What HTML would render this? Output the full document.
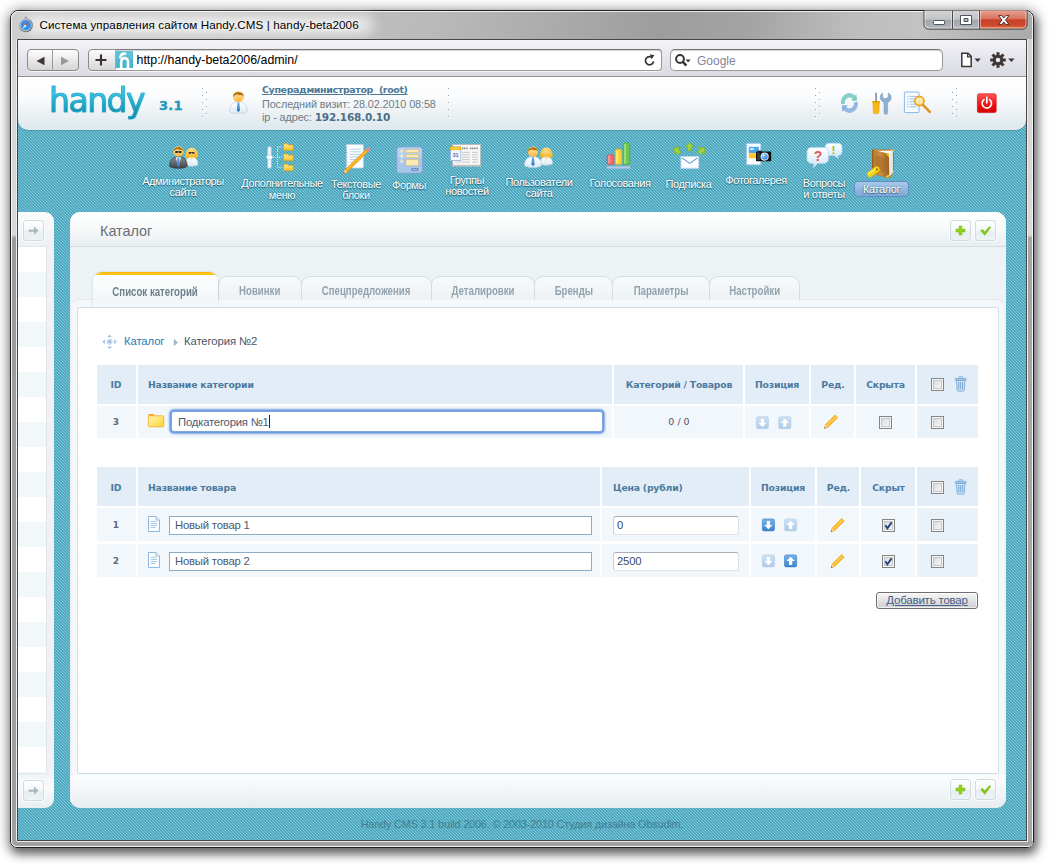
<!DOCTYPE html>
<html lang="ru">
<head>
<meta charset="utf-8">
<title>Система управления сайтом Handy.CMS | handy-beta2006</title>
<style>
*{box-sizing:border-box;margin:0;padding:0}
html,body{width:1052px;height:866px;overflow:hidden;background:#fff}
body{position:relative;font-family:"Liberation Sans",sans-serif;font-size:12px;color:#333}
.abs{position:absolute}
/* ---------- window frame ---------- */
#win{position:absolute;left:10px;top:10px;width:1024px;height:838px;border-radius:8px 8px 7px 7px;
 border:1px solid #1e1e1e;
 background:linear-gradient(97deg,#cfcfcf 0%,#c9c9c9 3%,#c2c2c2 25%,#b9b9b9 38%,#a9a9a9 50%,#9d9d9d 58%,#a4a4a4 66%,#bdbdbd 75%,#c2c2c2 81%,#adadad 89%,#a9a9a9 94%,#b9b9b9 100%);
 box-shadow:2px 5px 10px 1px rgba(0,0,0,.50), 0 1px 14px 2px rgba(0,0,0,.30);}
#win:before{content:"";position:absolute;left:0;top:0;right:0;bottom:0;border-radius:7px 7px 6px 6px;border:1px solid rgba(255,255,255,.8);}
#tglow{position:absolute;left:24px;top:15px;width:350px;height:20px;border-radius:10px;background:rgba(255,255,255,.62);filter:blur(6px)}
#frameL,#frameR,#frameB{position:absolute}
#frameL{left:12px;top:39px;width:5px;height:803px;background:linear-gradient(#d4d4d4 0,#d8d8d8 196px,#9c9c9c 199px,#a0a0a0 100%);border-right:1px solid #eee}
#frameR{left:1027px;top:39px;width:6px;height:803px;background:linear-gradient(#d4d4d4 0,#d8d8d8 196px,#a6a6a6 199px,#a8a8a8 100%);border-left:1px solid #eee;border-right:1px solid #f4f4f4}
#frameB{left:12px;top:841px;width:1021px;height:6px;border-radius:0 0 5px 5px;background:#a2a2a2;border-bottom:1px solid #f2f2f2}
#frameB:before{content:"";position:absolute;left:5px;top:0;width:1011px;height:1px;background:#ececec}
#title{position:absolute;left:39.5px;top:18px;font-size:11.65px;color:#000;white-space:nowrap;letter-spacing:.1px;
 text-shadow:0 0 5px #fff,0 0 8px #fff}
#client{position:absolute;left:17px;top:39px;width:1010px;height:802px;border:1px solid #4a4444;background:#5fb1c5;overflow:hidden}
/* ---------- browser toolbar ---------- */
#tb{position:absolute;left:0;top:0;width:1008px;height:37px;background:linear-gradient(#f3f3f8,#e4e4ec 55%,#dadae2);border-bottom:1px solid #8f8f96}
.btn{position:absolute;border:1px solid #8a8a8a;border-radius:4px;background:linear-gradient(#fefefe,#e9e9e9 50%,#d6d6d6);box-shadow:0 1px 0 rgba(255,255,255,.7)}
.field{position:absolute;background:#fff;border:1px solid #9a9a9a;border-top-color:#777;box-shadow:inset 0 1px 1px rgba(0,0,0,.18)}

/* ---------- page ---------- */
#page{position:absolute;left:0;top:37px;width:1008px;height:764px;
 background:repeating-linear-gradient(45deg,#4ba8bf 0,#4ba8bf 1.06px,#83c6d7 1.06px,#83c6d7 2.1213px)}
#hdr{position:absolute;left:0;top:0;width:1008px;height:53px;border-radius:0 0 10px 10px;
 background:linear-gradient(#ffffff 0,#fbfcfd 35%,#e9eff2 75%,#dde8ed 100%);box-shadow:0 1px 1px rgba(40,110,130,.35)}
#logo{position:absolute;left:31px;top:4px;font-family:"DejaVu Sans","Liberation Sans",sans-serif;font-size:33px;letter-spacing:-1.5px;color:#22a6c8;
 background:linear-gradient(#3cc4e0 30%,#168fb2 78%);-webkit-background-clip:text;background-clip:text;-webkit-text-fill-color:transparent;-webkit-text-stroke:.7px #25a8c9;line-height:40px}
#ver{position:absolute;left:141px;top:21px;font-family:"DejaVu Sans",sans-serif;font-weight:bold;font-size:13px;color:#2597ba;letter-spacing:.3px;-webkit-text-stroke:.4px #2597ba}
.vb{font-family:"DejaVu Sans",sans-serif;font-weight:bold}

.nl{position:absolute;width:120px;text-align:center;font-size:11px;line-height:11px;color:#fff;white-space:nowrap;letter-spacing:-.4px;text-shadow:0 1px 1px rgba(20,80,100,.75),0 0 2px rgba(30,90,110,.55)}
.ni{position:absolute}

#side{position:absolute;left:0;top:135px;width:36px;height:596px;border-radius:0 9px 9px 0;background:linear-gradient(#fafcfc 0,#eef2f4 30px,#eef2f4 560px,#f8fafb 575px,#e9eef0 100%)}
#side .list{position:absolute;left:0;top:34px;width:29px;height:528px;border:1px solid #dfe7eb;border-left:0;
 background:repeating-linear-gradient(#fff 0,#fff 25px,#f2f7fa 25px,#f2f7fa 50px)}
.sbtn{position:absolute;width:21px;height:21px;border:1px solid #cfdbe0;border-radius:3px;background:linear-gradient(#fdfefe,#f4f8f9 50%,#e7eef1 52%,#eef3f5);box-shadow:0 0 0 1px rgba(255,255,255,.6)}
#main{position:absolute;left:52px;top:135px;width:936px;height:596px;border-radius:10px;background:#edf2f5;overflow:hidden}
#mt{position:absolute;left:0;top:0;width:936px;height:35px;background:linear-gradient(#ffffff,#f6f8f9 50%,#e9eef1);border-bottom:1px solid #d3dde2}
#mtitle{position:absolute;left:30px;top:11px;font-size:14.4px;color:#686e74;letter-spacing:0}
#mb{position:absolute;left:0;top:563px;width:936px;height:33px;background:linear-gradient(#fbfcfd,#f1f5f7 55%,#e6ecef)}
#tframe{position:absolute;left:1px;top:87px;width:934px;height:480px;border-radius:9px;border:1px solid #dfe7eb;border-left-color:#eef2f5;border-right-color:#eef2f5;border-bottom-color:#eef2f5;background:#f5f8fa}
#inner{position:absolute;left:7px;top:95px;width:922px;height:467px;background:#fff;border:1px solid #d2dee4;border-radius:2px}

.tab{position:absolute;top:64px;height:24px;border:1px solid #d3dde3;border-bottom:0;border-radius:9px 9px 0 0;background:linear-gradient(#f7fafb,#edf2f5);text-align:center;font-weight:bold;font-size:12px;color:#93a3ae;line-height:29px;white-space:nowrap}
.tab span{display:inline-block;transform:scaleX(.805);transform-origin:50% 50%}
.tab.act{top:60px;height:35px;border:0;background:linear-gradient(#ffb800 0,#ffc928 3px,#fdfefe 3px,#f6f9fa 20px,#f2f6f8 28px,#f5f8fa 100%);color:#6e7f8c;line-height:40px;box-shadow:0 0 2px rgba(120,150,165,.45);clip-path:inset(-3px -3px 0 -3px)}

#inner .c{position:absolute;background:#f2f7fc}
#inner .c.l{background:#e9f1f9}
#inner .h{position:absolute;background:#e3edf7}
.th{position:absolute;font-family:"DejaVu Sans",sans-serif;font-weight:bold;font-size:9.3px;color:#4a7a9e;white-space:nowrap;letter-spacing:-.2px;line-height:12px;margin-top:1px}
.thc{text-align:center}
.td{position:absolute;font-family:"DejaVu Sans",sans-serif;font-size:9px;font-weight:bold;color:#5d6b78;white-space:nowrap;text-align:center;line-height:12px}
.inp{position:absolute;background:#fff;border:1px solid #8eabc4;font-size:11.3px;color:#4b5a6e;line-height:17px;padding-left:5px;white-space:nowrap;letter-spacing:-.2px}
.inp2{position:absolute;background:#fff;border:1px solid #dde1e8;border-top-color:#a9adb5;border-left-color:#c9cdd5;border-radius:3px;font-size:11.3px;color:#3c4c66;line-height:17px;padding-left:3px;letter-spacing:-.2px;white-space:nowrap}
.cb{position:absolute;width:13px;height:13px;border:1px solid #858585;background:linear-gradient(135deg,#cfd3d7,#ececec 55%,#f8f8f8);box-shadow:inset 0 0 0 1px #f6f6f6, inset 0 0 0 2px #c4c7ca}
</style>
</head>
<body>
<div id="win"></div><div id="tglow"></div>
<div id="frameL"></div><div id="frameR"></div><div id="frameB"></div>
<svg class="abs" style="left:10px;top:10px" width="1024" height="30" viewBox="10 10 1024 30">
<defs>
<linearGradient id="wG" x1="0" y1="0" x2="0" y2="1"><stop offset="0" stop-color="#d4d4d6"/><stop offset=".48" stop-color="#c2c3c6"/><stop offset=".5" stop-color="#a2a5aa"/><stop offset="1" stop-color="#b4b7bb"/></linearGradient>
<linearGradient id="wR" x1="0" y1="0" x2="0" y2="1"><stop offset="0" stop-color="#e9a393"/><stop offset=".45" stop-color="#d9705c"/><stop offset=".5" stop-color="#c8402a"/><stop offset=".8" stop-color="#cf4a2c"/><stop offset="1" stop-color="#e08058"/></linearGradient>
<radialGradient id="sfB" cx=".5" cy=".35" r=".75"><stop offset="0" stop-color="#4a90e6"/><stop offset=".6" stop-color="#2f8fe4"/><stop offset="1" stop-color="#62d0fa"/></radialGradient>
<linearGradient id="sfR" x1="0" y1="0" x2="1" y2="1"><stop offset="0" stop-color="#d8d8d8"/><stop offset=".5" stop-color="#8a8a8a"/><stop offset="1" stop-color="#5a5a5a"/></linearGradient>
</defs>
<path d="M924 10.500 H1027 V24.600 a4.500 4.500 0 0 1 -4.500 4.500 H928.500 a4.500 4.500 0 0 1 -4.500 -4.500Z" fill="url(#wG)"/>
<path d="M979.500 10.500 H1027 V24.600 a4.500 4.500 0 0 1 -4.500 4.500 H979.500Z" fill="url(#wR)"/>
<path d="M924 10.500 V24.600 a4.500 4.500 0 0 0 4.500 4.500 H1022.500 a4.500 4.500 0 0 0 4.500 -4.500 V10.500" fill="none" stroke="#3c3c3c" stroke-width="1"/>
<path d="M925 11.500 V24.400 a3.600 3.600 0 0 0 3.600 3.600 H1022.400 a3.600 3.600 0 0 0 3.600 -3.600 V11.500" fill="none" stroke="rgba(255,255,255,.55)" stroke-width="1"/>
<path d="M952.500 10.500V29M979.500 10.500V29" stroke="#4a4a4a" stroke-width="1"/><path d="M953.500 11V28M980.500 11V28M951.500 11V28M978.500 11V28" stroke="rgba(255,255,255,.45)" stroke-width="1"/>
<rect x="933.500" y="20.500" width="11" height="4" rx=".8" fill="#fff" stroke="#4d5360" stroke-width="1"/>
<path d="M960.500 15.500h11v9h-11z M964 18.500 v3 h4 v-3z" fill="#fff" fill-rule="evenodd" stroke="#4d5360" stroke-width="1" stroke-linejoin="round"/>
<path d="M998.600 15.600 h3.400 l1.800 2.500 1.800 -2.500 h3.400 l-3.400 4.400 3.400 4.400 h-3.400 l-1.800 -2.500 -1.800 2.500 h-3.400 l3.400 -4.400z" fill="#fff" stroke="#53332c" stroke-width="1" stroke-linejoin="round"/>
<circle cx="25.800" cy="25.200" r="7" fill="url(#sfR)"/><circle cx="25.800" cy="25.200" r="5.600" fill="url(#sfB)" stroke="#e8eef4" stroke-width=".5"/>
<rect x="24.600" y="16.800" width="2.400" height="1.800" rx=".6" fill="#9a9a9a"/>
<path d="M29.400 21.400 L26.600 26 L25 24.400Z" fill="#e04820"/><path d="M22.200 29 L25 24.400 L26.600 26Z" fill="#f4f4f4"/>
</svg>
<div id="title">Система управления сайтом Handy.CMS | handy-beta2006</div>
<div id="client">
  <div id="tb">
    <div class="btn" style="left:9px;top:9px;width:52px;height:22px"></div>
    <div class="abs" style="left:34px;top:10px;width:1px;height:20px;background:#9a9a9a"></div>
    <svg class="abs" style="left:9px;top:10px" width="52" height="22" viewBox="0 0 52 22"><path d="M9.5 11 L17.5 6.8 V15.2Z" fill="#3f3535"/><path d="M42 11 L34 6.8 V15.2Z" fill="#9c9797"/></svg>
    <div class="btn" style="left:70px;top:9px;width:574px;height:22px"></div>
    <div class="field" style="left:97px;top:9px;width:547px;height:22px;border-radius:0 4px 4px 0;border-left-color:#aaa"></div>
    <svg class="abs" style="left:76px;top:13px" width="14" height="14" viewBox="0 0 14 14"><path d="M7 1.5V12.5M1.5 7H12.5" stroke="#3a3030" stroke-width="2.1"/></svg>
    <svg class="abs" style="left:98px;top:11px" width="17" height="17" viewBox="0 0 17 17"><rect width="17" height="17" fill="#4cb6cf"/><rect x="0" y="0" width="17" height="8" fill="#6cc6dc" opacity=".6"/><path d="M5.2 17V10.5a3.4 3.4 0 0 1 6.8 0V17" fill="none" stroke="#fff" stroke-width="2.6"/><path d="M4.2 6.2C5 3.6 7 2.4 9.3 2.6" fill="none" stroke="#fff" stroke-width="2.4" stroke-linecap="round"/></svg>
    <div class="abs" id="url" style="left:118.5px;top:13px;font-size:12.4px;color:#000;white-space:nowrap">http://handy-beta2006/admin/</div>
    <svg class="abs" style="left:625px;top:14px" width="13" height="13" viewBox="0 0 13 13"><path d="M9.6 3.9A4.1 4.1 0 1 0 10.6 7.4" fill="none" stroke="#3a3434" stroke-width="1.7"/><path d="M7 .2 L11.4 1.2 L8.4 5Z" fill="#3a3434"/></svg>
    <div class="field" style="left:652px;top:9px;width:273px;height:22px;border-radius:5px"></div>
    <svg class="abs" style="left:656px;top:13px" width="20" height="16" viewBox="0 0 20 16"><circle cx="6" cy="6" r="3.9" fill="none" stroke="#3a3434" stroke-width="2"/><path d="M8.8 8.8L12.4 12.6" stroke="#3a3434" stroke-width="2.4"/><path d="M11.6 6.6h5l-2.5 3z" fill="#3a3434"/></svg>
    <div class="abs" style="left:679px;top:14px;font-size:12px;color:#83839a">Google</div>
    <svg class="abs" style="left:942px;top:12px" width="24" height="16" viewBox="0 0 24 16"><path d="M1.8 1.2h6.2l3.2 3.2v10.2H1.8z" fill="#fff" stroke="#3f3535" stroke-width="1.5"/><path d="M7.6 1.2v3.6h3.6" fill="none" stroke="#3f3535" stroke-width="1.3"/><path d="M14.5 6.4h6.4l-3.2 3.6z" fill="#3f3535"/></svg>
    <svg class="abs" style="left:971px;top:11px" width="28" height="18" viewBox="0 0 28 18"><g transform="translate(9,9)" fill="#3f3535"><circle r="5.2"/><g id="t"><rect x="-1.5" y="-7.8" width="3" height="15.6"/></g><rect x="-1.5" y="-7.8" width="3" height="15.6" transform="rotate(45)"/><rect x="-1.5" y="-7.8" width="3" height="15.6" transform="rotate(90)"/><rect x="-1.5" y="-7.8" width="3" height="15.6" transform="rotate(135)"/><circle r="2.3" fill="#e9e9f0"/></g><path d="M19.2 7.4h6.4l-3.2 3.6z" fill="#3f3535"/></svg>
  </div>
  <div id="page">
    <div id="hdr">
      <div id="logo">handy</div>
      <div id="ver">3.1</div>
      <div class="abs" style="left:184px;top:11px;width:1px;height:1px;background:#8ea6b4;box-shadow:0px 7px 0 #8ea6b4,0px 14px 0 #8ea6b4,0px 21px 0 #8ea6b4,0px 28px 0 #8ea6b4,4px 4px 0 #8ea6b4,4px 11px 0 #8ea6b4,4px 18px 0 #8ea6b4,4px 25px 0 #8ea6b4,1px 1px 0 #fff,1px 8px 0 #fff,1px 15px 0 #fff,1px 22px 0 #fff,1px 29px 0 #fff,5px 5px 0 #fff,5px 12px 0 #fff,5px 19px 0 #fff,5px 26px 0 #fff"></div><div class="abs" style="left:430px;top:11px;width:1px;height:1px;background:#8ea6b4;box-shadow:0px 7px 0 #8ea6b4,0px 14px 0 #8ea6b4,0px 21px 0 #8ea6b4,0px 28px 0 #8ea6b4,1px 1px 0 #fff,1px 8px 0 #fff,1px 15px 0 #fff,1px 22px 0 #fff,1px 29px 0 #fff"></div><div class="abs" style="left:797px;top:11px;width:1px;height:1px;background:#8ea6b4;box-shadow:0px 7px 0 #8ea6b4,0px 14px 0 #8ea6b4,0px 21px 0 #8ea6b4,0px 28px 0 #8ea6b4,4px 4px 0 #8ea6b4,4px 11px 0 #8ea6b4,4px 18px 0 #8ea6b4,4px 25px 0 #8ea6b4,1px 1px 0 #fff,1px 8px 0 #fff,1px 15px 0 #fff,1px 22px 0 #fff,1px 29px 0 #fff,5px 5px 0 #fff,5px 12px 0 #fff,5px 19px 0 #fff,5px 26px 0 #fff"></div><div class="abs" style="left:938px;top:11px;width:1px;height:1px;background:#8ea6b4;box-shadow:0px 7px 0 #8ea6b4,0px 14px 0 #8ea6b4,0px 21px 0 #8ea6b4,0px 28px 0 #8ea6b4,-4px 4px 0 #8ea6b4,-4px 11px 0 #8ea6b4,-4px 18px 0 #8ea6b4,-4px 25px 0 #8ea6b4,-1px 1px 0 #fff,-1px 8px 0 #fff,-1px 15px 0 #fff,-1px 22px 0 #fff,-1px 29px 0 #fff,-5px 5px 0 #fff,-5px 12px 0 #fff,-5px 19px 0 #fff,-5px 26px 0 #fff"></div>
      <!--USERICON-->
      <div class="abs vb" style="left:244px;top:7px;font-size:9.5px;color:#4d7896;text-decoration:underline;white-space:nowrap;letter-spacing:-.38px">Суперадминистратор&nbsp; (root)</div>
      <div class="abs" style="left:244px;top:21px;font-size:10.85px;color:#6d7c86;white-space:nowrap;letter-spacing:-.1px">Последний визит: 28.02.2010 08:58</div>
      <div class="abs" style="left:244px;top:34px;font-size:10.85px;color:#6d7c86;white-space:nowrap;letter-spacing:-.1px">ip - адрес: <span class="vb" style="color:#4d6e88;font-size:10.5px;letter-spacing:-.2px">192.168.0.10</span></div>
      <!--HDRICONS-->
    </div>
    <div id="nav">
<div class="nl" style="left:105px;top:98.7px;line-height:11.6px">Администраторы<br>сайта</div>
<div class="nl" style="left:204px;top:99.5px;line-height:12px">Дополнительные<br>меню</div>
<div class="nl" style="left:278px;top:101.5px;line-height:11.6px">Текстовые<br>блоки</div>
<div class="nl" style="left:331px;top:103.3px;">Формы</div>
<div class="nl" style="left:389px;top:98.1px;line-height:11px">Группы<br>новостей</div>
<div class="nl" style="left:461px;top:99.5px;line-height:11px">Пользователи<br>сайта</div>
<div class="nl" style="left:542px;top:101.0px;">Голосования</div>
<div class="nl" style="left:610.5px;top:101.5px;">Подписка</div>
<div class="nl" style="left:678px;top:97.7px;">Фотогалерея</div>
<div class="nl" style="left:746px;top:100.5px;line-height:11px">Вопросы<br>и ответы</div>
<div class="abs" style="left:836px;top:104px;width:55px;height:16px;border-radius:3.5px;background:linear-gradient(#a8c9e9,#7fa8d6);border:1px solid #5f8ec6"></div>
<div class="nl" style="left:803.5px;top:106.5px;">Каталог</div>
<!--NI0--><svg class="abs" style="left:0;top:0;pointer-events:none" width="1008" height="130" viewBox="18 77 1008 130"><defs>
<linearGradient id="gFace" x1="0" y1="0" x2="0" y2="1"><stop offset="0" stop-color="#ffe6b0"/><stop offset="1" stop-color="#ffb83a"/></linearGradient>
<linearGradient id="gHair" x1="0" y1="0" x2="0" y2="1"><stop offset="0" stop-color="#c9820c"/><stop offset="1" stop-color="#9a5206"/></linearGradient>
<linearGradient id="gBlond" x1="0" y1="0" x2="0" y2="1"><stop offset="0" stop-color="#ffe27a"/><stop offset="1" stop-color="#f2b20a"/></linearGradient>
<linearGradient id="gShirt" x1="0" y1="0" x2="0" y2="1"><stop offset="0" stop-color="#ffffff"/><stop offset="1" stop-color="#dbeaf4"/></linearGradient>
<linearGradient id="gSuit" x1="0" y1="0" x2="0" y2="1"><stop offset="0" stop-color="#8a8f94"/><stop offset="1" stop-color="#3f4347"/></linearGradient>
<linearGradient id="gTie" x1="0" y1="0" x2="0" y2="1"><stop offset="0" stop-color="#6aa8e4"/><stop offset="1" stop-color="#2f78c4"/></linearGradient>
<linearGradient id="gFold" x1="0" y1="0" x2="0" y2="1"><stop offset="0" stop-color="#ffe88a"/><stop offset="1" stop-color="#ffc830"/></linearGradient>
<linearGradient id="gFold2" x1="0" y1="0" x2="1" y2="1"><stop offset="0" stop-color="#fff6b0"/><stop offset="1" stop-color="#ffd232"/></linearGradient>
<linearGradient id="gBub" x1="0" y1="0" x2="0" y2="1"><stop offset="0" stop-color="#ffffff"/><stop offset="1" stop-color="#cfe6f6"/></linearGradient>
<linearGradient id="gBook" x1="0" y1="0" x2="1" y2="0"><stop offset="0" stop-color="#b9782a"/><stop offset=".5" stop-color="#c98d3e"/><stop offset="1" stop-color="#9c6220"/></linearGradient>
<linearGradient id="gPen" x1="0" y1="0" x2="1" y2="1"><stop offset="0" stop-color="#ffd24a"/><stop offset="1" stop-color="#f59a00"/></linearGradient>
<linearGradient id="gRed" x1="0" y1="0" x2="0" y2="1"><stop offset="0" stop-color="#ff5a5a"/><stop offset=".5" stop-color="#f01818"/><stop offset="1" stop-color="#d40000"/></linearGradient>
<linearGradient id="gArrD" x1="0" y1="0" x2="0" y2="1"><stop offset="0" stop-color="#7ab4e8"/><stop offset="1" stop-color="#3a84cf"/></linearGradient>
<linearGradient id="gArrL" x1="0" y1="0" x2="0" y2="1"><stop offset="0" stop-color="#cfe1f3"/><stop offset="1" stop-color="#aecbe8"/></linearGradient>
<linearGradient id="gLens" x1="0" y1="0" x2="1" y2="1"><stop offset="0" stop-color="#9fd0ff"/><stop offset="1" stop-color="#2a7fe0"/></linearGradient>
<linearGradient id="gGlass" x1="0" y1="0" x2="1" y2="1"><stop offset="0" stop-color="#fff6c8"/><stop offset="1" stop-color="#ffd86a"/></linearGradient>
</defs><path d="M229.6 111.4 C229.6 103.8 234.0 101.6 238.4 101.6 C242.8 101.6 247.20000000000002 103.8 247.20000000000002 111.4 C245.20000000000002 114.2 231.6 114.2 229.6 111.4Z" fill="url(#gShirt)" stroke="#bcd2dd" stroke-width=".7"/><path d="M237.5 102.19999999999999 L239.3 102.19999999999999 L240.0 110.2 L238.4 112.2 L236.8 110.2Z" fill="url(#gTie)"/><circle cx="238.4" cy="96.6" r="5.5" fill="url(#gFace)"/><path d="M232.9 97.19999999999999 A5.5 5.5 0 0 1 243.9 97.19999999999999 C243.3 95.39999999999999 242.3 94.39999999999999 239.8 95.19999999999999 C237.8 94.0 234.3 94.39999999999999 232.9 97.19999999999999Z" fill="url(#gHair)"/><g transform="translate(0 103) scale(1 1.16) translate(0 -103)"><path d="M842.96 103.90 A6.5 6.5 0 0 1 853.75 98.17" fill="none" stroke="#86d0c8" stroke-width="3.9"/><path d="M857.02 101.11 L856.36 95.27 L851.14 101.07Z" fill="#7cc9c2"/><path d="M855.84 102.10 A6.5 6.5 0 0 1 845.05 107.83" fill="none" stroke="#93b9e2" stroke-width="3.9"/><path d="M841.78 104.89 L842.44 110.73 L847.66 104.93Z" fill="#8ab2dd"/></g><rect x="875.200" y="92.600" width="1.800" height="9" fill="#8f9aa4"/><path d="M872.800 101.600 h6.600 l-.6 11 a1 1 0 0 1 -1 1 h-3.400 a1 1 0 0 1 -1 -1z" fill="#f8b818" stroke="#d89800" stroke-width=".5"/><rect x="872.600" y="101" width="7" height="1.800" fill="#e8a000"/><path d="M882.600 93 v4.200 l2 1.400 h1.600 l2 -1.400 V93 a5 5 0 0 1 1.600 8 l-2.200 1.800 v9.800 a1.600 1.600 0 0 1 -3.600 0 v-9.800 l-2.200 -1.800 a5 5 0 0 1 .8 -8z" fill="#8fb0cc" stroke="#6f94b4" stroke-width=".5"/><rect x="904.400" y="92" width="14.600" height="20.600" rx=".8" fill="#f7fbff" stroke="#8db6e2" stroke-width="1"/><path d="M907 96.400h1.400M909.600 96.400h7M907 99h1.400M909.600 99h7M907 101.600h1.400M909.600 101.600h7M907 104.200h1.400M909.600 104.200h7M907 106.800h1.400M909.600 106.800h7" stroke="#8fbbe8" stroke-width=".9"/><path d="M922.400 104.400 L929.800 111.800" stroke="#e0941a" stroke-width="2.600" stroke-linecap="round"/><circle cx="919.400" cy="101" r="4.600" fill="url(#gGlass)" fill-opacity=".85" stroke="#eaa418" stroke-width="1.700"/><rect x="977.400" y="93.800" width="18.800" height="18.800" rx="1.800" fill="url(#gRed)" stroke="#c80000" stroke-width=".6"/><path d="M984 99.600 A4.700 4.700 0 1 0 989.600 99.600" fill="none" stroke="#fff" stroke-width="1.700" stroke-linecap="round"/><path d="M986.800 97.400V102.800" stroke="#fff" stroke-width="1.700" stroke-linecap="round"/><path d="M185.2 157.79999999999998 C184.4 144.4 198.79999999999998 144.4 198.0 157.79999999999998 C195.2 158.79999999999998 188.0 158.79999999999998 185.2 157.79999999999998Z" fill="url(#gBlond)"/><path d="M185.2 164.6 C185.2 158.2 189.2 157.2 191.6 157.2 C194.0 157.2 198.0 158.2 198.0 164.6 C196.0 166.79999999999998 187.2 166.79999999999998 185.2 164.6Z" fill="url(#gShirt)" stroke="#bcd2dd" stroke-width=".7"/><path d="M189.79999999999998 157.5 L191.6 160.6 L193.4 157.5Z" fill="#ffd48a"/><circle cx="191.6" cy="152.6" r="3.6999999999999997" fill="url(#gFace)"/><path d="M187.6 152.4 C187.6 147.8 195.6 147.8 195.6 152.4 C193.2 149.8 191.0 148.8 187.6 152.4Z" fill="url(#gBlond)"/><rect x="188.6" y="152.0" width="2.6" height="1.8" rx=".8" fill="#2a2a2e"/><rect x="192.0" y="152.0" width="2.6" height="1.8" rx=".8" fill="#2a2a2e"/><rect x="190.6" y="152.2" width="2" height=".7" fill="#2a2a2e"/><path d="M169.6 166.2 C169.6 159.0 174.0 156.8 178.4 156.8 C182.8 156.8 187.20000000000002 159.0 187.20000000000002 166.2 C185.20000000000002 169.0 171.6 169.0 169.6 166.2Z" fill="url(#gSuit)" stroke="#3a3d40" stroke-width=".7"/><path d="M175.8 157.20000000000002 L178.4 167.2 L181.0 157.20000000000002Z" fill="#f4f8fb"/><path d="M177.5 157.4 L179.3 157.4 L180.0 165.0 L178.4 167.0 L176.8 165.0Z" fill="url(#gTie)"/><circle cx="178.4" cy="151.4" r="5.2" fill="url(#gFace)"/><path d="M173.20000000000002 152.0 A5.2 5.2 0 0 1 183.6 152.0 C183.0 150.20000000000002 182.0 149.20000000000002 179.8 150.0 C177.8 148.8 174.60000000000002 149.20000000000002 173.20000000000002 152.0Z" fill="url(#gHair)"/><rect x="175.1" y="151.1" width="2.9" height="2" rx=".8" fill="#2a2a2e"/><rect x="178.8" y="151.1" width="2.9" height="2" rx=".8" fill="#2a2a2e"/><rect x="177.4" y="151.4" width="2" height=".8" fill="#2a2a2e"/><rect x="267.8" y="146.8" width="3.4" height="21.4" rx="1.2" fill="#eef5fb" stroke="#c3d6e6" stroke-width=".6"/><rect x="266.6" y="155.2" width="5.8" height="4" rx="1.6" fill="#ffffff" stroke="#b9cfe2" stroke-width=".6"/><path d="M273 157.2H282M277.5 147H282M277.5 167.2H282M277.5 147V167.2" fill="none" stroke="#e8f3f8" stroke-width="1" stroke-dasharray="1 1"/><path d="M283.6 143.79999999999998 h4.032 l1 1.2 h4.568 v5.199999999999999 h-9.6z" fill="url(#gFold)" stroke="#e3a30c" stroke-width=".8"/><path d="M283.6 154.0 h4.032 l1 1.2 h4.568 v5.199999999999999 h-9.6z" fill="url(#gFold)" stroke="#e3a30c" stroke-width=".8"/><path d="M283.6 164.2 h4.032 l1 1.2 h4.568 v5.199999999999999 h-9.6z" fill="url(#gFold)" stroke="#e3a30c" stroke-width=".8"/><rect x="346.2" y="144.6" width="17.2" height="23.4" rx="1.2" fill="#fdfeff" stroke="#b7cfe6" stroke-width=".8"/><path d="M349.5 149.2h11.4M349.5 151.8h11.4M349.5 154.4h11.4M349.5 157h11.4M349.5 159.6h11.4M349.5 162.2h8" stroke="#a9cdee" stroke-width=".9"/><path d="M345 147.5h2.4M345 150h2.4M345 152.5h2.4M345 155h2.4M345 157.500h2.4M345 160h2.4M345 162.5h2.4M345 165h2.4" stroke="#8c9aa6" stroke-width=".8"/><path d="M343.4 173.6 L344.4 170.2 L365.9 149.6 L368.0 151.6 L346.8 172.6Z" fill="url(#gPen)" stroke="#d98500" stroke-width=".5"/><path d="M343.4 173.6 L344.4 170.2 L346.8 172.6Z" fill="#f6d9a8"/><path d="M343.4 173.6l.5-1.5 1 1.100z" fill="#333"/><path d="M365.600 149.2 L367 147.900 a1.800 1.800 0 0 1 2.800 2.600 L368.4 151.8Z" fill="#f08a8a"/><rect x="396.600" y="146.8" width="26" height="26.4" rx="2.6" fill="#a8c6ea" stroke="#7d9dd0" stroke-width=".9"/><rect x="397.600" y="147.800" width="24" height="10" rx="2" fill="#bcd5f0" opacity=".7"/><rect x="406" y="149.6" width="12.4" height="3" fill="#fdeab4" stroke="#d9bb7a" stroke-width=".6"/><rect x="406" y="154.6" width="12.4" height="3" fill="#fdeab4" stroke="#d9bb7a" stroke-width=".6"/><rect x="406" y="159.6" width="12.4" height="5.8" fill="#fdeab4" stroke="#d9bb7a" stroke-width=".6"/><path d="M399.800 151.1h3.600M401.600 149.29999999999998v3.600" stroke="#fdeab4" stroke-width="1.2"/><path d="M399.800 156.1h3.600M401.600 154.29999999999998v3.600" stroke="#fdeab4" stroke-width="1.2"/><path d="M399.800 161.4h3.600M401.600 159.6v3.600" stroke="#fdeab4" stroke-width="1.2"/><rect x="411.4" y="168" width="7" height="3" fill="#6c90c8"/><path d="M413.200 169.500h1.200M415.400 169.500h1.200" stroke="#dbe8f8" stroke-width="1"/><rect x="452.600" y="144.6" width="28" height="21.6" fill="#f7f7f7" stroke="#b9b9b9" stroke-width=".8"/><rect x="453" y="164.8" width="27.2" height="1.6" fill="#a8a8a8" opacity=".6"/><path d="M462 148.400h6M470 148.400h8" stroke="#8a8a8a" stroke-width="1.6" stroke-dasharray="1.2 .6"/><path d="M462 152.400h8M472 152.400h6M462 154.800h8M472 154.800h6M462 157.200h8M472 157.200h6M462 159.600h8M472 159.600h6M455 162h6M462 162h8M472 162h6" stroke="#c4c4c4" stroke-width=".9"/><rect x="450.400" y="147" width="10.400" height="13.4" fill="#f4f9ff" stroke="#8fb2dc" stroke-width=".8"/><rect x="450.400" y="147" width="10.400" height="2.800" fill="#ffd23a" stroke="#e0a800" stroke-width=".6"/><text x="455.600" y="157.400" font-family="Liberation Sans, sans-serif" font-size="5.6" font-weight="bold" fill="#3f78c4" text-anchor="middle">31</text><path d="M540.2 157.2 C539.4 144.2 553.4 144.2 552.5999999999999 157.2 C549.8 158.2 543.0 158.2 540.2 157.2Z" fill="url(#gBlond)"/><path d="M540.1999999999999 163.6 C540.1999999999999 157.8 544.0 156.8 546.4 156.8 C548.8 156.8 552.6 157.8 552.6 163.6 C550.6 165.79999999999998 542.1999999999999 165.79999999999998 540.1999999999999 163.6Z" fill="url(#gShirt)" stroke="#bcd2dd" stroke-width=".7"/><path d="M544.6 157.10000000000002 L546.4 160.20000000000002 L548.1999999999999 157.10000000000002Z" fill="#ffd48a"/><circle cx="546.4" cy="152.2" r="3.5000000000000004" fill="url(#gFace)"/><path d="M542.6 152.0 C542.6 147.6 550.1999999999999 147.6 550.1999999999999 152.0 C548.0 149.4 545.8 148.4 542.6 152.0Z" fill="url(#gBlond)"/><path d="M524.6 165.4 C524.6 158.79999999999998 528.8 156.6 533.0 156.6 C537.2 156.6 541.4 158.79999999999998 541.4 165.4 C539.4 168.20000000000002 526.6 168.20000000000002 524.6 165.4Z" fill="url(#gShirt)" stroke="#bcd2dd" stroke-width=".7"/><path d="M532.1 157.2 L533.9 157.2 L534.6 164.20000000000002 L533.0 166.20000000000002 L531.4 164.20000000000002Z" fill="url(#gTie)"/><circle cx="533.0" cy="151.6" r="5.2" fill="url(#gFace)"/><path d="M527.8 152.2 A5.2 5.2 0 0 1 538.2 152.2 C537.6 150.4 536.6 149.4 534.4 150.2 C532.4 149.0 529.1999999999999 149.4 527.8 152.2Z" fill="url(#gHair)"/><rect x="606.8" y="166.2" width="23.6" height="2.6" rx=".6" fill="#b4cde4" stroke="#8fb0d0" stroke-width=".5"/><rect x="607.2" y="154.8" width="6.6" height="9.6" rx="1.6" fill="#ee6a6a" stroke="#d84848" stroke-width=".6"/><rect x="608" y="155.600" width="2.200" height="8" rx="1" fill="#f6a0a0" opacity=".8"/><rect x="615.2" y="149.200" width="6.6" height="15.2" rx="1.6" fill="#f8d430" stroke="#e0b000" stroke-width=".6"/><rect x="616" y="150" width="2.200" height="13.600" rx="1" fill="#fcea80" opacity=".8"/><rect x="623.2" y="143" width="6.6" height="21.4" rx="1.6" fill="#6cc84a" stroke="#48a82c" stroke-width=".6"/><rect x="624" y="143.800" width="2.200" height="19.800" rx="1" fill="#a4e488" opacity=".8"/><rect x="681" y="156.600" width="17.6" height="11.6" fill="#fbfdff" stroke="#c7dcef" stroke-width="1"/><path d="M682.200 158 L689.800 163.400 L697.400 158" fill="none" stroke="#6ea2da" stroke-width="1.1"/><path d="M0 -4.6 L4.4 -.2 H1.900 V3.600 H-1.900 V-.2 H-4.400Z" transform="translate(689.4 147.2) rotate(0)" fill="#a2d040" stroke="#7eb020" stroke-width=".7"/><path d="M0 -4.6 L4.4 -.2 H1.900 V3.600 H-1.900 V-.2 H-4.400Z" transform="translate(677.4 150.8) rotate(-45)" fill="#a2d040" stroke="#7eb020" stroke-width=".7"/><path d="M0 -4.6 L4.4 -.2 H1.900 V3.600 H-1.900 V-.2 H-4.400Z" transform="translate(701.4 150.8) rotate(45)" fill="#a2d040" stroke="#7eb020" stroke-width=".7"/><rect x="746.4" y="143.400" width="14.4" height="21.4" rx="1" fill="#fbfdff" stroke="#a9c8ea" stroke-width=".9"/><path d="M745.400 146h2M745.400 148.600h2M745.400 151.200h2M745.400 153.800h2M745.400 156.400h2M745.400 159h2M745.400 161.600h2" stroke="#8fb6e4" stroke-width=".8"/><rect x="748.8" y="146.800" width="10" height="6.4" fill="#4aa8f0"/><rect x="748.8" y="153.200" width="10" height="5" fill="#ffc62a"/><rect x="750" y="148.200" width="4" height="1.600" fill="#e6f4ff"/><rect x="756" y="151.600" width="15.2" height="9.6" rx=".8" fill="#111"/><rect x="757.600" y="150.600" width="4" height="1.400" fill="#222"/><rect x="757" y="152.600" width="3" height="7.400" fill="#555" opacity=".6"/><circle cx="764.6" cy="156.600" r="4.100" fill="#dfe8f0"/><circle cx="764.6" cy="156.600" r="3.200" fill="url(#gLens)"/><circle cx="763.600" cy="155.600" r="1" fill="#eaf6ff"/><path d="M829 143.200 h9.200 a3.800 3.800 0 0 1 3.800 3.800 v4.800 a3.800 3.800 0 0 1 -3.800 3.800 h-.6 l.6 3.400 -3.800 -3.400 h-5.400 a3.800 3.800 0 0 1 -3.800 -3.800 v-4.800 a3.800 3.800 0 0 1 3.800 -3.800z" fill="url(#gBub)" stroke="#b5d6ec" stroke-width=".7"/><path d="M811.400 147.400 h12.600 a4.400 4.400 0 0 1 4.400 4.400 v7.200 a4.400 4.400 0 0 1 -4.400 4.400 h-6.400 l-4.400 4.600 .6 -4.600 h-2.400 a4.400 4.400 0 0 1 -4.400 -4.400 v-7.200 a4.400 4.400 0 0 1 4.400 -4.400z" fill="url(#gBub)" stroke="#b5d6ec" stroke-width=".7"/><text x="818" y="160.600" font-family="Liberation Sans, sans-serif" font-size="14" font-weight="bold" fill="#e2565a" text-anchor="middle">?</text><text x="833.4" y="153.600" font-family="Liberation Sans, sans-serif" font-size="11.5" font-weight="bold" fill="#8cc022" text-anchor="middle">!</text><path d="M872.200 149.600 L894 149.400 L894 172.400 L889.400 178 L873 174Z" fill="#b47428"/><path d="M874.400 150.800 L892.700 150.600 L892.700 172.400 L889.600 176.400 L889 154.400Z" fill="#fdfdfb"/><path d="M889.400 154.400 L892.700 150.800 L892.700 172.400 L889.600 176.400Z" fill="#e4e6ea"/><path d="M891 149.400 H894 V152.600Z M894 169 V172.400 L892.400 174.400Z" fill="#f8c21a"/><path d="M872.100 149.600 L888.900 153.800 L888.900 177.800 L872.100 173.900Z" fill="url(#gBook)"/><path d="M875.800 155.600 L886.200 158.200 L886.200 172.800 L875.800 170.400Z" fill="#a8692a" opacity=".55"/><path d="M872.100 149.600 L873.400 149.900 L873.400 174.200 L872.100 173.900Z" fill="#8a5418" opacity=".7"/><path d="M885.400 152.900 L888.900 153.800 V157.600Z M885.200 176.900 L888.900 177.800 V174.200Z" fill="#f8c21a"/><g transform="translate(873.500 171.800) rotate(-36)"><rect x="-6.800" y="-2.900" width="13.600" height="5.800" rx="2" fill="#f6d20e" stroke="#e0b400" stroke-width=".5"/><rect x="-6.600" y="-2.300" width="12" height="2.200" rx="1" fill="#fff06a" opacity=".6"/><circle cx="4.200" cy="0" r="1" fill="#8a5a20"/></g></svg><!--NI1-->
</div>
    <div id="side"><div class="sbtn" style="left:5px;top:8px"><svg width="19" height="19" viewBox="0 0 19 19" style="position:absolute;left:0;top:0"><path d="M4.6 8.5h5.4V5.4L14.6 9.6 10 13.800V10.700H4.6z" fill="#aab9bf"/></svg></div><div class="list"></div><div class="sbtn" style="left:5px;top:568px"><svg width="19" height="19" viewBox="0 0 19 19" style="position:absolute;left:0;top:0"><path d="M4.6 8.5h5.4V5.4L14.6 9.6 10 13.800V10.700H4.6z" fill="#aab9bf"/></svg></div></div>
    <div id="main">
  <div id="mt"><div id="mtitle">Каталог</div><div class="sbtn" style="left:880px;top:8px"><svg width="19" height="19" viewBox="0 0 19 19" style="position:absolute;left:0;top:0"><path d="M8.1 5h2.8v3.100h3.100v2.800h-3.100v3.100h-2.800v-3.100h-3.100v-2.800h3.100z" fill="#8fd11f" stroke="#7cbf18" stroke-width=".6"/></svg></div><div class="sbtn" style="left:905px;top:8px"><svg width="19" height="19" viewBox="0 0 19 19" style="position:absolute;left:0;top:0"><path d="M4.3 9.6 6.4 8l2.2 2.6 5-5.4 1.6 1.1-6.4 8.4z" fill="#82c41c"/></svg></div></div>
  <div id="tframe"></div>
  <div class="tab" style="left:148px;width:84px"><span>Новинки</span></div>
<div class="tab" style="left:231px;width:131px"><span>Спецпредложения</span></div>
<div class="tab" style="left:361px;width:104px"><span>Деталировки</span></div>
<div class="tab" style="left:464px;width:79px"><span>Бренды</span></div>
<div class="tab" style="left:542px;width:98px"><span>Параметры</span></div>
<div class="tab" style="left:639px;width:91px"><span>Настройки</span></div>
<div class="tab act" style="left:23px;width:125px"><span>Список категорий</span></div>
  <div id="inner">
  
<div class="abs" style="left:46px;top:27px;font-size:11.3px;color:#1c7db8;white-space:nowrap;letter-spacing:-.1px">Каталог</div>
<svg class="abs" style="left:95px;top:30px" width="6" height="9" viewBox="0 0 6 9"><path d="M.8 .8 5 4.5 .8 8.2z" fill="#a3b7c6"/></svg>
<div class="abs" style="left:106px;top:27px;font-size:11.3px;color:#46566c;white-space:nowrap;letter-spacing:-.1px">Категория №2</div>
<div class="h" style="left:19px;top:57px;width:39px;height:39px"></div>
<div class="c" style="left:19px;top:98px;width:39px;height:32px"></div>
<div class="h" style="left:60px;top:57px;width:474px;height:39px"></div>
<div class="c" style="left:60px;top:98px;width:474px;height:32px"></div>
<div class="h" style="left:536px;top:57px;width:129px;height:39px"></div>
<div class="c" style="left:536px;top:98px;width:129px;height:32px"></div>
<div class="h" style="left:667px;top:57px;width:64px;height:39px"></div>
<div class="c" style="left:667px;top:98px;width:64px;height:32px"></div>
<div class="h" style="left:733px;top:57px;width:43px;height:39px"></div>
<div class="c" style="left:733px;top:98px;width:43px;height:32px"></div>
<div class="h" style="left:778px;top:57px;width:59px;height:39px"></div>
<div class="c" style="left:778px;top:98px;width:59px;height:32px"></div>
<div class="h" style="left:839px;top:57px;width:61px;height:39px"></div>
<div class="c l" style="left:839px;top:98px;width:61px;height:32px"></div>
<div class="th thc" style="left:23.0px;top:70px;width:30px">ID</div>
<div class="th" style="left:70px;top:70px">Название категории</div>
<div class="th thc" style="left:537.0px;top:70px;width:128px">Категорий / Товаров</div>
<div class="th thc" style="left:669.0px;top:70px;width:60px">Позиция</div>
<div class="th thc" style="left:735.0px;top:70px;width:40px">Ред.</div>
<div class="th thc" style="left:779.5px;top:70px;width:56px">Скрыта</div>
<div class="cb" style="left:853px;top:70px"></div>
<!--TRASH1-->
<div class="td" style="left:18.0px;top:108px;width:40px">3</div>
<!--FOLDER-->
<div class="inp" style="left:93px;top:103px;width:432px;height:21px;border:1px solid #7fa6dc;border-radius:3px;line-height:20.5px;padding-left:6px;box-shadow:0 0 0 1px #6b9be0,0 0 2px 2px rgba(90,140,220,.75)">Подкатегория №1<span style="display:inline-block;width:1px;height:13px;background:#222;vertical-align:-2px;margin-left:0"></span></div>
<div class="td" style="left:571.0px;top:108px;width:60px;font-weight:normal;font-size:9.5px;color:#556">0 / 0</div>
<!--ROW1ICONS-->
<div class="cb" style="left:801px;top:108px"></div>
<div class="cb" style="left:853px;top:108px"></div>
<div class="h" style="left:19px;top:159px;width:39px;height:39px"></div>
<div class="c" style="left:19px;top:200px;width:39px;height:33px"></div>
<div class="c" style="left:19px;top:236px;width:39px;height:33px"></div>
<div class="h" style="left:60px;top:159px;width:462px;height:39px"></div>
<div class="c" style="left:60px;top:200px;width:462px;height:33px"></div>
<div class="c" style="left:60px;top:236px;width:462px;height:33px"></div>
<div class="h" style="left:524px;top:159px;width:147px;height:39px"></div>
<div class="c" style="left:524px;top:200px;width:147px;height:33px"></div>
<div class="c" style="left:524px;top:236px;width:147px;height:33px"></div>
<div class="h" style="left:673px;top:159px;width:64px;height:39px"></div>
<div class="c" style="left:673px;top:200px;width:64px;height:33px"></div>
<div class="c" style="left:673px;top:236px;width:64px;height:33px"></div>
<div class="h" style="left:739px;top:159px;width:42px;height:39px"></div>
<div class="c" style="left:739px;top:200px;width:42px;height:33px"></div>
<div class="c" style="left:739px;top:236px;width:42px;height:33px"></div>
<div class="h" style="left:783px;top:159px;width:54px;height:39px"></div>
<div class="c" style="left:783px;top:200px;width:54px;height:33px"></div>
<div class="c" style="left:783px;top:236px;width:54px;height:33px"></div>
<div class="h" style="left:839px;top:159px;width:61px;height:39px"></div>
<div class="c l" style="left:839px;top:200px;width:61px;height:33px"></div>
<div class="c l" style="left:839px;top:236px;width:61px;height:33px"></div>
<div class="th thc" style="left:23.0px;top:173px;width:30px">ID</div>
<div class="th" style="left:70px;top:173px">Название товара</div>
<div class="th" style="left:535px;top:173px">Цена (рубли)</div>
<div class="th thc" style="left:675.0px;top:173px;width:60px">Позиция</div>
<div class="th thc" style="left:740.5px;top:173px;width:40px">Ред.</div>
<div class="th thc" style="left:785.5px;top:173px;width:50px">Скрыт</div>
<div class="cb" style="left:853px;top:173px"></div>
<!--TRASH2-->
<div class="td" style="left:18.0px;top:211px;width:40px">1</div>
<!--DOC0-->
<div class="inp" style="left:91px;top:208px;width:423px;height:19px">Новый товар 1</div>
<div class="inp2" style="left:535px;top:208px;width:126px;height:19px">0</div>
<div class="cb" style="left:804px;top:211px"><svg width="11" height="11" viewBox="0 0 11 11" style="position:absolute;left:0;top:0"><path d="M2.4 5.2 4.4 8.4 8.6 2.4" fill="none" stroke="#2b3f78" stroke-width="1.9"/></svg></div>
<div class="cb" style="left:853px;top:211px"></div>
<div class="td" style="left:18.0px;top:247px;width:40px">2</div>
<!--DOC1-->
<div class="inp" style="left:91px;top:244px;width:423px;height:19px">Новый товар 2</div>
<div class="inp2" style="left:535px;top:244px;width:126px;height:19px">2500</div>
<div class="cb" style="left:804px;top:247px"><svg width="11" height="11" viewBox="0 0 11 11" style="position:absolute;left:0;top:0"><path d="M2.4 5.2 4.4 8.4 8.6 2.4" fill="none" stroke="#2b3f78" stroke-width="1.9"/></svg></div>
<div class="cb" style="left:853px;top:247px"></div>
<!--ROW2ICONS-->
<div class="abs" style="left:798px;top:284px;width:102px;height:17px;border:1px solid #6f6f6f;border-radius:3px;background:linear-gradient(#f6f6f6,#e3e3e3 50%,#cfcfcf);text-align:center;font-size:11.5px;line-height:15px;color:#44608a;text-decoration:underline;letter-spacing:-.2px;box-shadow:inset 0 0 0 1px rgba(255,255,255,.7)">Добавить товар</div>
<!--CI0--><svg class="abs" style="left:0;top:0;pointer-events:none" width="920" height="320" viewBox="78 308 920 320"><circle cx="109.6" cy="341.8" r="2.6" fill="#dcebf8" stroke="#a9c8e8" stroke-width=".8"/><circle cx="109.6" cy="341.8" r="1.2" fill="#7fa9da"/><path d="M0 -7.4 L2.5 -4.6 H-2.5Z" transform="translate(109.6 341.8) rotate(0)" fill="#a9c6e6"/><path d="M0 -7.4 L2.5 -4.6 H-2.5Z" transform="translate(109.6 341.8) rotate(90)" fill="#a9c6e6"/><path d="M0 -7.4 L2.5 -4.6 H-2.5Z" transform="translate(109.6 341.8) rotate(180)" fill="#a9c6e6"/><path d="M0 -7.4 L2.5 -4.6 H-2.5Z" transform="translate(109.6 341.8) rotate(270)" fill="#a9c6e6"/><path d="M148.400 416.400 v-1.400 a1 1 0 0 1 1 -1 h3.800 a1 1 0 0 1 1 1 v1.400z" fill="#ffa51e"/><rect x="148.400" y="415.800" width="15.400" height="11" rx="1" fill="url(#gFold2)" stroke="#f5a81c" stroke-width=".8"/><path d="M148.500 516.5 h7.400 l3.600 3.600 v11.400 h-11z" fill="#fbfdff" stroke="#8db8e2" stroke-width="1"/><path d="M155.900 516.5 v3.600 h3.600" fill="#dcebf8" stroke="#8db8e2" stroke-width=".8"/><path d="M150.800 521.5h5M150.800 523.5h6.400M150.800 525.5h6.400M150.800 527.5h5" stroke="#9cc2e8" stroke-width=".9"/><path d="M148.500 552.5 h7.400 l3.600 3.600 v11.400 h-11z" fill="#fbfdff" stroke="#8db8e2" stroke-width="1"/><path d="M155.900 552.5 v3.600 h3.600" fill="#dcebf8" stroke="#8db8e2" stroke-width=".8"/><path d="M150.800 557.5h5M150.800 559.5h6.400M150.800 561.5h6.400M150.800 563.5h5" stroke="#9cc2e8" stroke-width=".9"/><g transform="translate(756 416.4)"><rect x=".3" y=".3" width="12.200" height="12" rx="1.600" fill="url(#gArrL)" stroke="#b4cfea" stroke-width=".6"/><path d="M6.400 10.600 L2.300 6.300 H4.800 V2.400 H8 V6.300 H10.500 Z" fill="#fff"/></g><g transform="translate(778.4 416.4)"><rect x=".3" y=".3" width="12.200" height="12" rx="1.600" fill="url(#gArrL)" stroke="#b4cfea" stroke-width=".6"/><path d="M6.400 2.200 L10.500 6.500 H8 V10.400 H4.800 V6.500 H2.300 Z" fill="#fff"/></g><g transform="translate(762 518.6)"><rect x=".3" y=".3" width="12.200" height="12" rx="1.600" fill="url(#gArrD)" stroke="#3a7ec8" stroke-width=".6"/><path d="M6.400 10.600 L2.300 6.300 H4.800 V2.400 H8 V6.300 H10.500 Z" fill="#fff"/></g><g transform="translate(784.2 518.6)"><rect x=".3" y=".3" width="12.200" height="12" rx="1.600" fill="url(#gArrL)" stroke="#b4cfea" stroke-width=".6"/><path d="M6.400 2.200 L10.500 6.500 H8 V10.400 H4.800 V6.500 H2.300 Z" fill="#fff"/></g><g transform="translate(762 554.6)"><rect x=".3" y=".3" width="12.200" height="12" rx="1.600" fill="url(#gArrL)" stroke="#b4cfea" stroke-width=".6"/><path d="M6.400 10.600 L2.300 6.300 H4.800 V2.400 H8 V6.300 H10.500 Z" fill="#fff"/></g><g transform="translate(784.2 554.6)"><rect x=".3" y=".3" width="12.200" height="12" rx="1.600" fill="url(#gArrD)" stroke="#3a7ec8" stroke-width=".6"/><path d="M6.400 2.200 L10.500 6.500 H8 V10.400 H4.800 V6.500 H2.300 Z" fill="#fff"/></g><g transform="translate(824.4 414.2)"><path d="M0 14.200 L.9 10.600 L10.700 .8 L13.300 3.400 L3.500 13.200Z" fill="url(#gPen)" stroke="#e89a00" stroke-width=".5"/><path d="M0 14.200 L.9 10.600 L3.500 13.200Z" fill="#f4d6a0"/><path d="M0 14.200l.4-1.500 1.100 1.100z" fill="#444"/><path d="M2.200 11.900 L12 2.100" stroke="#ffe27a" stroke-width=".9"/></g><g transform="translate(831 517.6)"><path d="M0 14.200 L.9 10.600 L10.700 .8 L13.300 3.400 L3.500 13.200Z" fill="url(#gPen)" stroke="#e89a00" stroke-width=".5"/><path d="M0 14.200 L.9 10.600 L3.500 13.200Z" fill="#f4d6a0"/><path d="M0 14.200l.4-1.500 1.100 1.100z" fill="#444"/><path d="M2.200 11.900 L12 2.100" stroke="#ffe27a" stroke-width=".9"/></g><g transform="translate(831 553.6)"><path d="M0 14.200 L.9 10.600 L10.700 .8 L13.300 3.400 L3.500 13.200Z" fill="url(#gPen)" stroke="#e89a00" stroke-width=".5"/><path d="M0 14.200 L.9 10.600 L3.500 13.200Z" fill="#f4d6a0"/><path d="M0 14.200l.4-1.500 1.100 1.100z" fill="#444"/><path d="M2.200 11.900 L12 2.100" stroke="#ffe27a" stroke-width=".9"/></g><g transform="translate(954.8 376.2)"><path d="M1.600 4.200 h8.600 l-.8 10 a.8 .8 0 0 1 -.8 .7 h-5.400 a.8 .8 0 0 1 -.8 -.7z" fill="#cfe3f4" stroke="#6fa3d2" stroke-width=".8"/><path d="M4 5.800v7.400M5.900 5.800v7.400M7.800 5.800v7.400" stroke="#6fa3d2" stroke-width=".9"/><rect x=".4" y="2.200" width="11" height="1.900" rx=".6" fill="#a9cbe8" stroke="#6fa3d2" stroke-width=".7"/><rect x="4" y=".5" width="3.800" height="1.700" rx=".5" fill="#cfe3f4" stroke="#6fa3d2" stroke-width=".7"/></g><g transform="translate(954.8 479.2)"><path d="M1.600 4.200 h8.600 l-.8 10 a.8 .8 0 0 1 -.8 .7 h-5.400 a.8 .8 0 0 1 -.8 -.7z" fill="#cfe3f4" stroke="#6fa3d2" stroke-width=".8"/><path d="M4 5.800v7.400M5.900 5.800v7.400M7.800 5.800v7.400" stroke="#6fa3d2" stroke-width=".9"/><rect x=".4" y="2.200" width="11" height="1.900" rx=".6" fill="#a9cbe8" stroke="#6fa3d2" stroke-width=".7"/><rect x="4" y=".5" width="3.800" height="1.700" rx=".5" fill="#cfe3f4" stroke="#6fa3d2" stroke-width=".7"/></g></svg><!--CI1-->
  </div>
  <div id="mb"><div class="sbtn" style="left:880px;top:4px"><svg width="19" height="19" viewBox="0 0 19 19" style="position:absolute;left:0;top:0"><path d="M8.1 5h2.8v3.100h3.100v2.800h-3.100v3.100h-2.800v-3.100h-3.100v-2.800h3.100z" fill="#8fd11f" stroke="#7cbf18" stroke-width=".6"/></svg></div><div class="sbtn" style="left:905px;top:4px"><svg width="19" height="19" viewBox="0 0 19 19" style="position:absolute;left:0;top:0"><path d="M4.3 9.6 6.4 8l2.2 2.6 5-5.4 1.6 1.1-6.4 8.4z" fill="#82c41c"/></svg></div></div>
</div>
    <div id="foot" class="abs" style="left:0;top:741px;width:1008px;text-align:center;font-size:10.75px;color:#3f7f95;letter-spacing:-.1px">Handy CMS 3.1 build 2006. © 2003-2010 Студия дизайна Obsudim.</div>
  </div>
</div>
</body>
</html>
